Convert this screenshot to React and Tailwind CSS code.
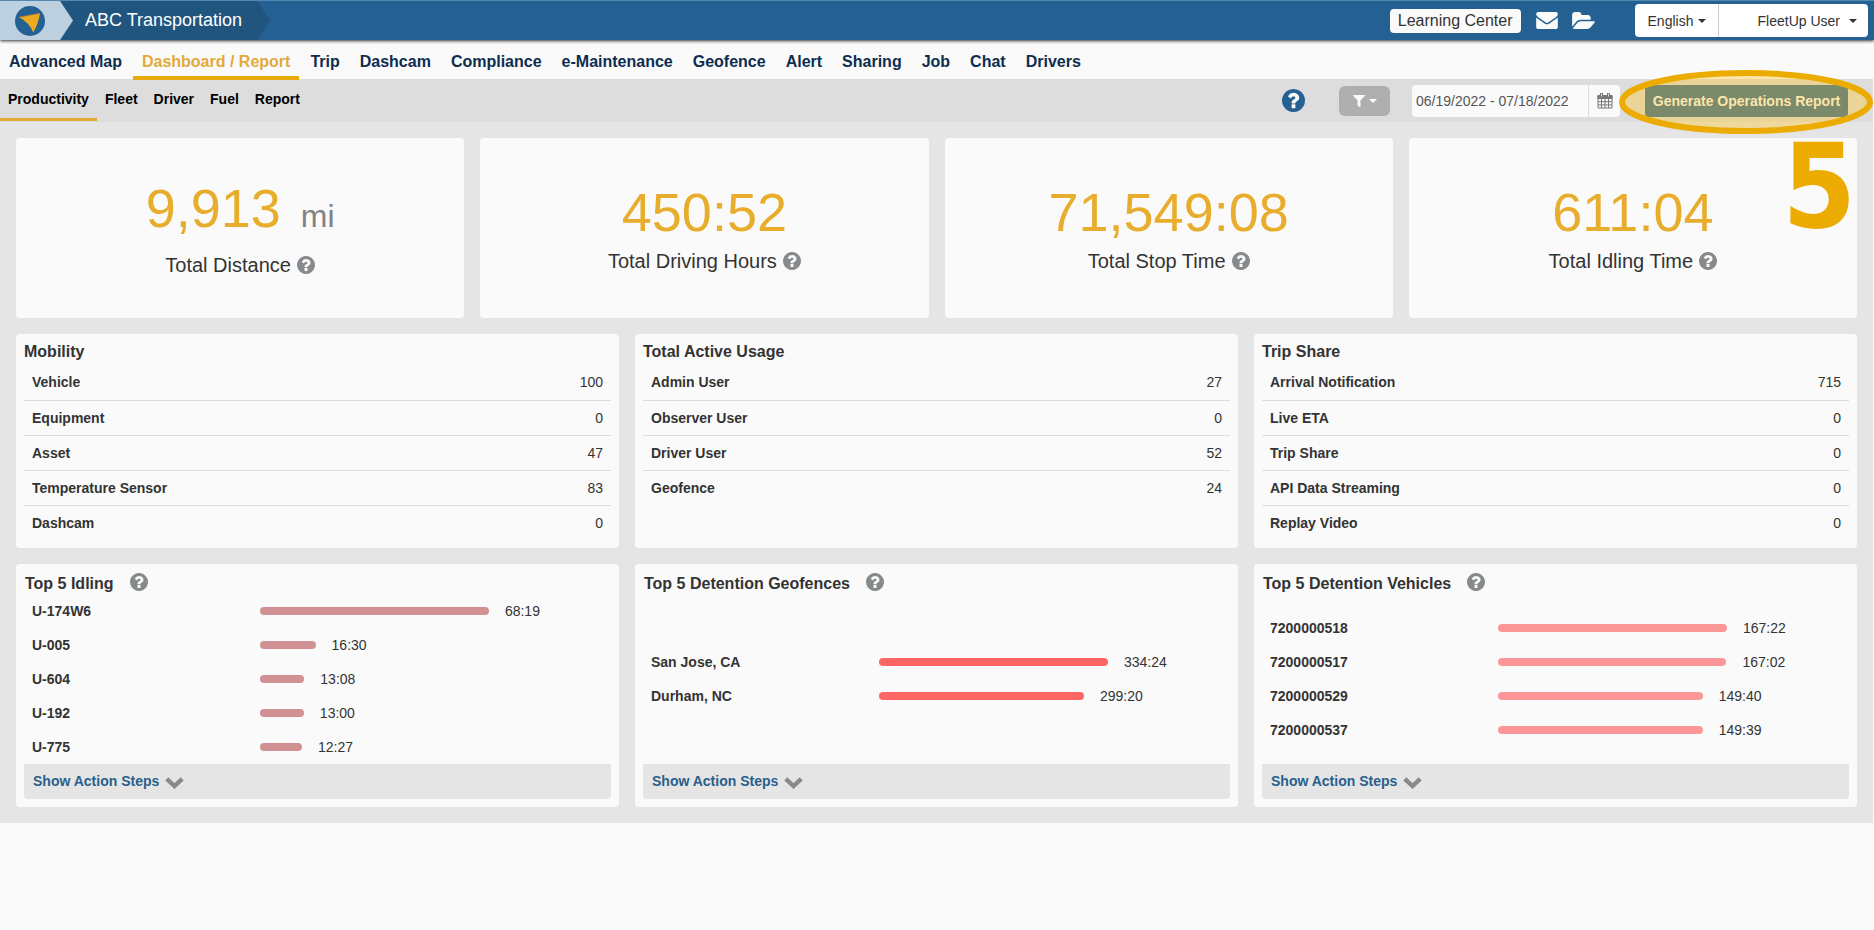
import React from "react";
import { FaFilter } from "react-icons/fa";

const navItems = [
  "Advanced Map", "Dashboard / Report", "Trip", "Dashcam", "Compliance", "e-Maintenance",
  "Geofence", "Alert", "Sharing", "Job", "Chat", "Drivers",
];
const subItems = ["Productivity", "Fleet", "Driver", "Fuel", "Report"];

const stats = [
  { value: "9,913", unit: "mi", label: "Total Distance" },
  { value: "450:52", label: "Total Driving Hours" },
  { value: "71,549:08", label: "Total Stop Time" },
  { value: "611:04", label: "Total Idling Time" },
];

const tables = [
  {
    title: "Mobility",
    rows: [["Vehicle", 100], ["Equipment", 0], ["Asset", 47], ["Temperature Sensor", 83], ["Dashcam", 0]],
  },
  {
    title: "Total Active Usage",
    rows: [["Admin User", 27], ["Observer User", 0], ["Driver User", 52], ["Geofence", 24]],
  },
  {
    title: "Trip Share",
    rows: [["Arrival Notification", 715], ["Live ETA", 0], ["Trip Share", 0], ["API Data Streaming", 0], ["Replay Video", 0]],
  },
];

const charts = [
  {
    title: "Top 5 Idling",
    color: "bg-[#cf9191]",
    rows: [["U-174W6", "68:19"], ["U-005", "16:30"], ["U-604", "13:08"], ["U-192", "13:00"], ["U-775", "12:27"]],
  },
  {
    title: "Top 5 Detention Geofences",
    color: "bg-[#ff6666]",
    rows: [["San Jose, CA", "334:24"], ["Durham, NC", "299:20"]],
  },
  {
    title: "Top 5 Detention Vehicles",
    color: "bg-[#fc9797]",
    rows: [["7200000518", "167:22"], ["7200000517", "167:02"], ["7200000529", "149:40"], ["7200000537", "149:39"]],
  },
];

const minutes = (t) => {
  const [h, m] = t.split(":").map(Number);
  return h * 60 + m;
};

function HelpIcon({ className }) {
  return (
    <svg viewBox="128 128 1536 1536" className={className} fill="currentColor" aria-hidden="true">
      <circle cx="896" cy="896" r="640" fill="#fafafa" />
      <path d="M1024 1376v-192q0-14-9-23t-23-9h-192q-14 0-23 9t-9 23v192q0 14 9 23t23 9h192q14 0 23-9t9-23zm256-672q0-88-55.5-163t-138.5-116-170-41q-243 0-371 213-15 24 8 42l132 100q7 6 19 6 16 0 25-12 53-68 86-92 34-24 86-24 48 0 85.5 26t37.5 59q0 38-20 61t-68 45q-63 28-115.5 86.5t-52.5 125.5v36q0 14 9 23t23 9h192q14 0 23-9t9-23q0-19 21.5-49.5t54.5-49.5q32-18 49-28.5t46-35 44.5-48 28-60.5 12.5-81zm384 192q0 209-103 385.5t-279.5 279.5-385.5 103-385.5-103-279.5-279.5-103-385.5 103-385.5 279.5-279.5 385.5-103 385.5 103 279.5 279.5 103 385.5z" />
    </svg>
  );
}

function Caret({ className = "" }) {
  return (
    <svg viewBox="0 0 8 4" className={"h-1 w-2 shrink-0 " + className} fill="currentColor" aria-hidden="true">
      <path d="M0 0 H8 L4 4 Z" />
    </svg>
  );
}

function MailIcon() {
  return (
    <svg viewBox="0 256 1792 1408" className="h-[17px] w-[22px]" fill="currentColor" aria-hidden="true">
      <path d="M1792 710v794q0 66-47 113t-113 47h-1472q-66 0-113-47t-47-113v-794q44 49 101 87 362 246 497 345 57 42 92.5 65.5t94.5 48 110 24.5h2q51 0 110-24.5t94.5-48 92.5-65.5q170-123 498-345 57-39 100-87zm0-294q0 79-49 151t-122 123q-376 261-468 325-10 7-42.5 31t-54 38.5-52 32.5-57.5 27-50 9h-2q-23 0-50-9t-57.5-27-52-32.5-54-38.5-42.5-31q-91-64-262-182.5t-205-142.5q-62-42-117-115.5t-55-136.5q0-78 41.5-130t118.5-52h1472q65 0 112.5 47t47.5 113z" />
    </svg>
  );
}

function FolderIcon() {
  return (
    <svg viewBox="0 128 1879 1408" className="h-[17px] w-[23px]" fill="currentColor" aria-hidden="true">
      <path d="M1879 952q0 31-31 66l-336 396q-43 51-120.5 86.5t-143.5 35.5h-1088q-34 0-60.5-13t-26.5-43q0-31 31-66l336-396q43-51 120.5-86.5t143.5-35.5h1088q34 0 60.5 13t26.5 43zm-343-344v160h-832q-94 0-197 47.5t-164 119.5l-337 396-5 6q0-4-.5-12.5t-.5-12.5v-960q0-92 66-158t158-66h320q92 0 158 66t66 158v32h544q92 0 158 66t66 158z" />
    </svg>
  );
}

function CalendarIcon() {
  return (
    <svg viewBox="0 0 16 17" className="h-[17px] w-4" fill="none" stroke="#777">
      <path d="M1 3.5 H15 V16 H1 Z M1 6.5 H15 M1 9.7 H15 M1 12.9 H15 M4.5 6.5 V16 M8 6.5 V16 M11.5 6.5 V16" />
      <path d="M1 3.5 H15 V6.5 H1 Z" fill="#777" />
      <path d="M4.5 1 V5 M11.5 1 V5" stroke="#777" strokeWidth="3" />
      <path d="M4.5 1.5 V4.5 M11.5 1.5 V4.5" stroke="#ddd" />
    </svg>
  );
}

function Header() {
  return (
    <header className="relative flex h-10 items-center justify-between border-t border-[#5487ad] bg-[#246192] shadow-[0_1px_3px_rgba(0,0,0,0.8)]">
      <div className="flex self-stretch">
        <a
          href="#home"
          aria-label="Home"
          className="z-10 flex w-[73px] items-center bg-[#bdd0df] pl-[15px] [clip-path:polygon(0_0,60px_0,100%_50%,60px_100%,0_100%)]"
        >
          <svg viewBox="0 0 30 30" className="size-[30px]">
            <circle cx="15" cy="15" r="15" fill="#246192" />
            <path d="M4 11.2 L25 7.3 Q23.6 17.5 18.2 26.5 Q14.5 16.5 4 11.2 Z" fill="#eaab1f" />
            <path d="M4 11.2 L25 7.3" stroke="#b5783a" strokeWidth="0.8" />
          </svg>
        </a>
        <h1 className="-ml-[13px] flex items-center bg-[#20557f] pr-7 pb-[2px] pl-[25px] text-lg text-white [clip-path:polygon(0_0,calc(100%-13px)_0,100%_50%,calc(100%-13px)_100%,0_100%)]">
          ABC Transportation
        </h1>
      </div>
      <div className="flex items-center pr-[6px]">
        <a href="#learn" className="rounded bg-[#fafafa] px-2 text-base leading-6 text-[#333]">Learning Center</a>
        <a href="#mail" aria-label="Messages" className="ml-[15px] text-[#fafafa]"><MailIcon /></a>
        <a href="#files" aria-label="Files" className="ml-[14px] text-[#fafafa]"><FolderIcon /></a>
        <div className="ml-10 flex h-[33px] items-stretch rounded bg-white text-sm text-[#333]">
          <label className="relative flex items-center border-r border-[#ccc]">
            <select aria-label="Language" className="h-full w-[83px] appearance-none bg-transparent pl-[13px]">
              <option>English</option>
            </select>
            <Caret className="pointer-events-none absolute right-3" />
          </label>
          <button type="button" className="flex items-center gap-[9px] pr-[11px] pl-[39px]">
            FleetUp User <Caret />
          </button>
        </div>
      </div>
    </header>
  );
}

function MainNav() {
  return (
    <nav aria-label="Main" className="flex h-[39px] gap-0.5 bg-[#fafafa] text-base font-bold text-[#0d2d50]">
      {navItems.map((item, i) => (
        <a
          key={item}
          href={"#" + item}
          className={
            i === 1
              ? "relative z-10 flex h-10 items-center border-b-4 border-[#e8a90c] px-[9px] pt-[7px] text-[#e2a93b]"
              : "flex h-10 items-center border-b-4 border-transparent px-[9px] pt-[7px]"
          }
        >
          {item}
        </a>
      ))}
    </nav>
  );
}

function SubNav() {
  return (
    <div className="mr-px flex h-[43px] items-center justify-between bg-[#ddd]">
      <nav aria-label="Dashboard" className="flex h-full text-sm font-bold text-black">
        {subItems.map((item, i) => (
          <a
            key={item}
            href={"#" + item}
            className={
              i === 0
                ? "mb-px flex items-center border-b-[3px] border-[#e2ab33] px-2"
                : "mb-px flex items-center border-b-[3px] border-transparent px-2"
            }
          >
            {item}
          </a>
        ))}
      </nav>
      <div className="flex items-center pr-[25px]">
        <button type="button" aria-label="Help" className="text-[#246192]"><HelpIcon className="size-[23px]" /></button>
        <button type="button" aria-label="Filter" className="ml-[34px] flex h-[30px] w-[51px] items-center justify-center gap-1 rounded-md bg-[#b0afae] text-[#fafafa]">
          <FaFilter size={12} /> <Caret />
        </button>
        <div className="ml-[22px] flex h-8 overflow-hidden rounded bg-[#fafafa]">
          <input aria-label="Date range" defaultValue="06/19/2022 - 07/18/2022" className="w-44 pl-1 text-sm text-[#555]" />
          <button type="button" aria-label="Open calendar" className="flex w-8 items-center justify-center border-l border-[#ddd]">
            <CalendarIcon />
          </button>
        </div>
        <div className="relative ml-[25px]">
          <button type="button" className="h-8 w-[203px] rounded-sm bg-[#246192] text-sm font-bold whitespace-nowrap text-[#fafafa]">
            Generate Operations Report
          </button>
          <svg viewBox="0 0 254 64" className="pointer-events-none absolute -top-[15px] -left-[26px] z-20 h-16 w-[254px]" aria-hidden="true">
            <ellipse cx="127" cy="32" rx="124" ry="29" fill="#ffc82f" fillOpacity="0.4" stroke="#ebab00" strokeWidth="6" />
          </svg>
        </div>
      </div>
    </div>
  );
}

function StatCard({ value, unit, label }) {
  return (
    <section className="flex h-[180px] flex-col items-center justify-center rounded bg-[#fafafa]">
      <p className="text-[54px] leading-[66px] text-[#e8ad2c]">
        {value}
        {unit && <span className="ml-5 text-[32px] text-[#808285]">{unit}</span>}
      </p>
      <h2 className="flex items-center gap-[6px] text-xl leading-8 text-[#333]">
        {label} <HelpIcon className="size-[18px] text-[#878a8c]" />
      </h2>
    </section>
  );
}

function TableCard({ title, rows }) {
  return (
    <section className="rounded bg-[#fafafa] px-2 pt-[5px] pb-2 text-[#333]">
      <h2 className="text-base leading-[26px] font-bold">{title}</h2>
      <table className="w-full text-sm">
        <tbody>
          {rows.map(([name, count]) => (
            <tr key={name} className="h-[35px] border-b border-[#ddd] last:border-0">
              <th scope="row" className="px-2 text-left font-bold">{name}</th>
              <td className="px-2 text-right">{count}</td>
            </tr>
          ))}
        </tbody>
      </table>
    </section>
  );
}

function ChartCard({ title, color, rows }) {
  const max = minutes(rows[0][1]);
  return (
    <section className="rounded bg-[#fafafa] px-2 pb-2 text-[#333]">
      <h2 className="flex h-[30px] items-center gap-4 pt-[10px] pl-px text-base font-bold">
        {title} <HelpIcon className="mb-1 size-[18px] text-[#878a8c]" />
      </h2>
      <ul className="flex h-[170px] flex-col justify-center px-2 text-sm">
        {rows.map(([name, time]) => (
          <li key={name} className="flex h-[34px] items-center">
            <span className="w-2/5 font-bold">{name}</span>
            <span className="flex w-3/5 items-center gap-4">
              <span className={"h-2 rounded-full " + color} style={{ width: (minutes(time) / max) * 66.7 + "%" }} />
              {time}
            </span>
          </li>
        ))}
      </ul>
      <button type="button" className="flex h-[35px] w-full items-center gap-[6px] rounded-b bg-[#e5e5e5] px-[9px] pb-[2px] text-sm font-bold text-[#285f8d]">
        Show Action Steps
        <svg viewBox="0 0 19 12" className="mt-1 h-3 w-[19px]" fill="none" stroke="#878a8c" strokeWidth="4.4">
          <path d="M1.8 1.8 L9.5 9 L17.2 1.8" />
        </svg>
      </button>
    </section>
  );
}

export default function App() {
  return (
    <div className="min-h-screen bg-[#fafafa] font-['Liberation_Sans',Arial,sans-serif]">
      <Header />
      <MainNav />
      <SubNav />
      <main className="relative mr-px flex flex-col gap-4 bg-[#e5e5e5] p-4">
        <div className="grid grid-cols-4 gap-4">
          {stats.map((s) => <StatCard key={s.label} {...s} />)}
        </div>
        <div className="grid grid-cols-3 gap-4">
          {tables.map((t) => <TableCard key={t.title} {...t} />)}
        </div>
        <div className="grid grid-cols-3 gap-4">
          {charts.map((c) => <ChartCard key={c.title} {...c} />)}
        </div>
        <span className="absolute top-0 right-[17px] font-['DejaVu_Sans_Condensed','DejaVu_Sans',sans-serif] text-[118px] leading-[128px] font-bold text-[#ebab00]">5</span>
      </main>
    </div>
  );
}
